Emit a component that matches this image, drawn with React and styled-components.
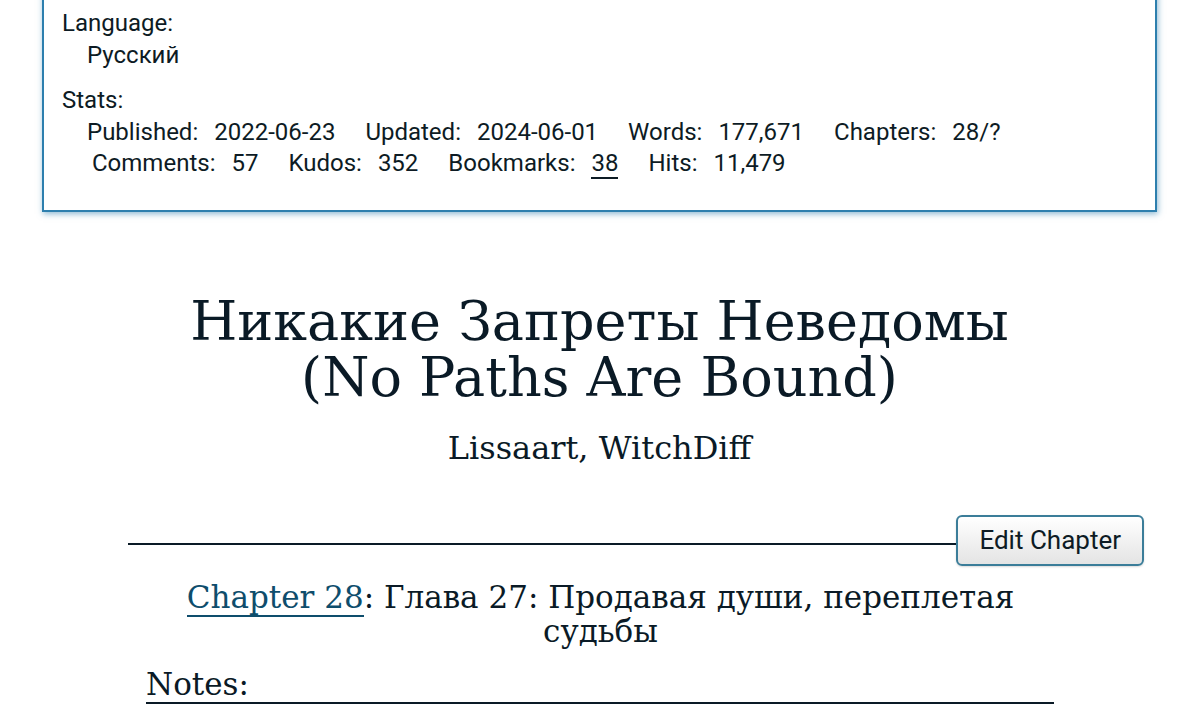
import React from "react";
import styled, { createGlobalStyle } from "styled-components";

const GlobalStyle = createGlobalStyle`
  html, body {
    margin: 0;
    padding: 0;
    background: #fff;
  }
  body {
    font-family: Roboto, "Noto Sans", sans-serif;
    color: #0d1b24;
    overflow: hidden;
  }
`;

const stats = [
  ["Published", "2022-06-23"],
  ["Updated", "2024-06-01"],
  ["Words", "177,671"],
  ["Chapters", "28/?"],
  ["Comments", "57"],
  ["Kudos", "352"],
  ["Bookmarks", "38", true],
  ["Hits", "11,479"],
];

const App = () => {
  return (
    <Page>
      <GlobalStyle />
      <MetaBox>
        <MetaBox.Group>
          <MetaBox.Label>Language:</MetaBox.Label>
          <MetaBox.Value>Русский</MetaBox.Value>
        </MetaBox.Group>
        <MetaBox.Group>
          <MetaBox.Label>Stats:</MetaBox.Label>
          <StatList>
            {stats.map(([k, v, link]) => (
              <StatList.Pair key={k}>
                <dt>{k}:</dt>
                <dd>{link ? <a href="#">{v}</a> : v}</dd>
              </StatList.Pair>
            ))}
          </StatList>
        </MetaBox.Group>
      </MetaBox>

      <Preface>
        <Preface.Title>
          <span>Никакие Запреты Неведомы</span>
          <span>(No Paths Are Bound)</span>
        </Preface.Title>
        <Preface.Byline>Lissaart, WitchDiff</Preface.Byline>
      </Preface>

      <Chapter>
        <Chapter.Bar>
          <Chapter.Rule />
          <EditButton>Edit Chapter</EditButton>
        </Chapter.Bar>
        <Chapter.Title>
          <a href="#">Chapter 28</a>: Глава 27: Продавая души, переплетая судьбы
        </Chapter.Title>
        <Notes>Notes:</Notes>
      </Chapter>
    </Page>
  );
};

export default App;

const Page = styled.div`
  width: 1199px;
  height: 722px;
  overflow: hidden;
  box-sizing: border-box;
  padding: 0 42px;
`;

const MetaBox = styled.div`
  margin-top: -20px;
  border: 2px solid #2d7fae;
  box-shadow: 1px 2px 6px rgba(45, 127, 174, 0.55);
  background: #fff;
  padding: 26px 18px 30px;
  display: flex;
  flex-direction: column;
  gap: 14px;
  font-size: 24px;
  line-height: 31.5px;
`;

MetaBox.Group = styled.div`
  display: flex;
  flex-direction: column;
`;

MetaBox.Label = styled.div``;

MetaBox.Value = styled.div`
  padding-left: 25px;
`;

const StatList = styled.dl`
  margin: 0;
  padding-left: 30px;
  text-indent: -5px;
`;

StatList.Pair = styled.span`
  display: inline-block;
  text-indent: 0;
  margin-right: 30px;

  dt,
  dd {
    display: inline;
    margin: 0;
  }
  dd {
    margin-left: 16px;
  }
  a {
    color: inherit;
    text-decoration: none;
    border-bottom: 2px solid #0d1b24;
  }
`;

const Preface = styled.div`
  margin-top: 82px;
  text-align: center;
  font-family: "DejaVu Serif", "Liberation Serif", serif;
  color: #0a1a26;
`;

Preface.Title = styled.h2`
  margin: 0;
  font-size: 54px;
  font-weight: normal;
  line-height: 56px;
  display: flex;
  flex-direction: column;
  align-items: center;
`;

Preface.Byline = styled.div`
  margin-top: 22px;
  font-size: 32px;
  line-height: 40px;
`;

const Chapter = styled.div`
  margin-top: 47px;
  padding: 0 13px 0 86px;
  font-family: "DejaVu Serif", "Liberation Serif", serif;
  color: #0a1a26;
`;

Chapter.Bar = styled.div`
  display: flex;
  align-items: center;
`;

Chapter.Rule = styled.div`
  flex: 1;
  height: 2px;
  margin-top: 8px;
  background: #0a1a26;
`;

const EditButton = styled.button`
  font-family: Roboto, "Noto Sans", sans-serif;
  font-size: 26px;
  color: #0d1b24;
  height: 51px;
  padding: 0 21px;
  border: 2px solid #3b7d99;
  border-radius: 6px;
  background: linear-gradient(#ffffff, #e4e4e4);
  box-shadow: 0 1px 2px rgba(0, 0, 0, 0.15);
  cursor: pointer;
`;

Chapter.Title = styled.h3`
  margin: 14px 111px 0 40px;
  text-align: center;
  font-size: 31px;
  font-weight: normal;
  line-height: 34px;

  a {
    color: #0e4d6c;
    text-decoration: none;
    border-bottom: 2px solid #0e4d6c;
  }
`;

const Notes = styled.h3`
  margin: 18px 90px 0 18px;
  font-size: 31px;
  font-weight: normal;
  line-height: 36px;
  border-bottom: 2px solid #0a1a26;
`;
